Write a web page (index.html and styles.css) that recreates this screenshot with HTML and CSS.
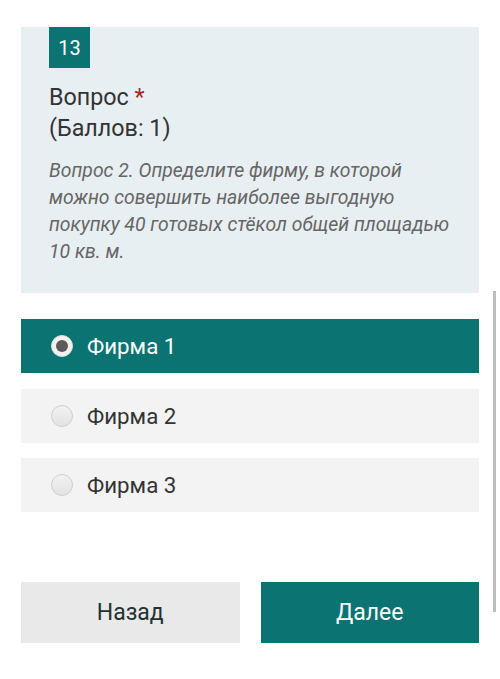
FILE: index.html
```html
<!DOCTYPE html>
<html lang="ru">
<head>
<meta charset="utf-8">
<link rel="stylesheet" href="styles.css">
</head>
<body>
<div class="page">
  <section class="card">
    <div class="badge">13</div>
    <h2 class="title">Вопрос <span class="req">*</span><br>(Баллов: 1)</h2>
    <p class="question">Вопрос 2. Определите фирму, в которой можно совершить наиболее выгодную покупку 40 готовых стёкол общей площадью 10 кв. м.</p>
  </section>
  <div class="options">
    <div class="option selected"><span class="radio"></span><span class="label">Фирма 1</span></div>
    <div class="option"><span class="radio"></span><span class="label">Фирма 2</span></div>
    <div class="option"><span class="radio"></span><span class="label">Фирма 3</span></div>
  </div>
  <div class="buttons">
    <div class="btn back">Назад</div>
    <div class="btn next">Далее</div>
  </div>
</div>
<div class="scrollbar"></div>
</body>
</html>
```
FILE: styles.css
```css
html, body {
  margin: 0;
  padding: 0;
  background: #fff;
  font-family: Roboto, "Noto Sans", sans-serif;
}
.page {
  padding: 27px 21px 0 21px;
  width: 458px;
}
.card {
  background: #e8eff2;
  padding: 0 28px 28px 28px;
}
.badge {
  width: 41px;
  height: 41px;
  background: #0b7473;
  color: #fff;
  font-size: 20px;
  display: flex;
  align-items: center;
  justify-content: center;
}
.title {
  margin: 14px 0 0 0;
  font-weight: 400;
  font-size: 23.3px;
  line-height: 31px;
  color: #333;
}
.req {
  color: #a4262c;
}
.question {
  margin: 13px 0 0 0;
  font-style: italic;
  font-size: 19.4px;
  line-height: 27px;
  color: #666;
}
.options {
  margin-top: 26px;
  display: flex;
  flex-direction: column;
  gap: 15.5px;
}
.option {
  height: 54px;
  background: #f3f3f3;
  display: flex;
  align-items: center;
  padding-left: 30px;
  gap: 14px;
}
.option .label {
  font-size: 22.3px;
  color: #333;
}
.radio {
  width: 22px;
  height: 22px;
  border-radius: 50%;
  box-sizing: border-box;
  border: 1px solid #cfcfcf;
  background: linear-gradient(#f2f2f2, #e2e2e2);
  display: flex;
  align-items: center;
  justify-content: center;
}
.option.selected {
  background: #0b7473;
}
.option.selected .label {
  color: #fff;
}
.option.selected .radio {
  background: #f4f1f1;
  border-color: #ddd;
}
.option.selected .radio::after {
  content: "";
  width: 12px;
  height: 12px;
  border-radius: 50%;
  background: #5b5b5b;
}
.buttons {
  margin-top: 70px;
  display: grid;
  grid-template-columns: 1fr 1fr;
  gap: 21px;
}
.btn {
  height: 61px;
  display: flex;
  align-items: center;
  justify-content: center;
  font-size: 23px;
}
.back {
  background: #e9e9e9;
  color: #223232;
}
.next {
  background: #0b7473;
  color: #fff;
}
.scrollbar {
  position: absolute;
  left: 493px;
  top: 291px;
  width: 3px;
  height: 321px;
  background: #bdbdbd;
}
```
